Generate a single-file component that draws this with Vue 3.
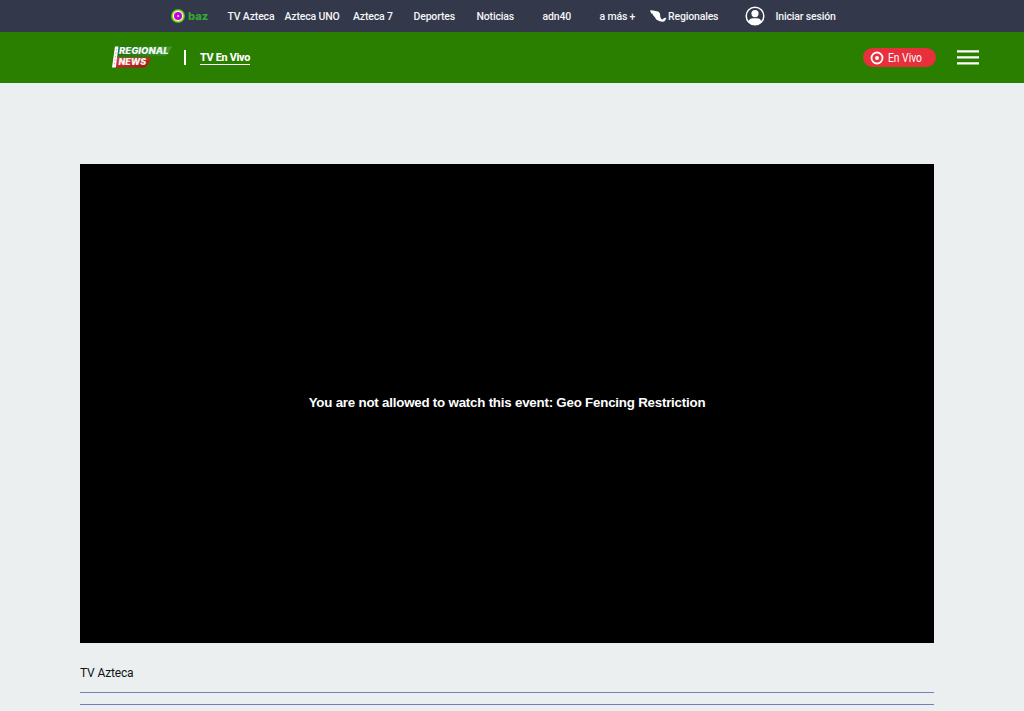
<script setup>
const links = ['TV Azteca', 'Azteca UNO', 'Azteca 7', 'Deportes', 'Noticias', 'adn40', 'a más +']
</script>

<template>
  <div class="page">
    <nav class="top">
      <a class="baz">
        <svg width="14" height="14" viewBox="0 0 14 14">
          <circle cx="7" cy="7" r="7" fill="#49b829" />
          <circle cx="7" cy="7" r="6" fill="#a5e52d" />
          <circle cx="7" cy="7" r="4.9" fill="#fff" />
          <circle cx="7" cy="7" r="4" fill="#c800d8" />
          <circle cx="7.2" cy="7" r=".9" fill="#fff" />
        </svg>
        <svg width="21" height="14" viewBox="0 0 21 14">
          <text x="0" y="10.6" textLength="20.3" lengthAdjust="spacingAndGlyphs">baz</text>
        </svg>
      </a>
      <a v-for="link in links" :key="link" class="link">{{ link }}</a>
      <svg class="map" width="17" height="13" viewBox="0 0 17 13">
        <path d="M0 .2 3.3.5 5.3 1 8.3 1.4 10 3.6 10.3 7 11.4 9.1 12.7 9.4 14 8.1 16.5 7.7 15.6 9.7 14.2 11.6 12.5 11.8 9.6 11.2 6.2 9.4 5.1 7.5 3.3 5.5 2.3 3.6 1.2 3.4Z" fill="#fff" />
      </svg>
      <a class="link">Regionales</a>
      <svg class="avatar" width="20" height="20" viewBox="0 0 20 20">
        <circle cx="10" cy="10" r="8.8" fill="none" stroke="#fff" stroke-width="1.5" />
        <circle cx="10" cy="7.6" r="3.6" fill="#fff" />
        <path d="M3.4 15.7Q4.6 12.3 8 12.3H12Q15.4 12.3 16.6 15.7Q14 19 10 19T3.4 15.7Z" fill="#fff" />
      </svg>
      <a class="link">Iniciar sesión</a>
    </nav>

    <header class="bar">
      <svg class="logo" width="60" height="24" viewBox="0 0 60 24">
        <defs>
          <linearGradient id="greenFade"><stop offset="0" stop-color="#176e20" /><stop offset="1" stop-color="#419d37" /></linearGradient>
          <linearGradient id="redFade" x2="1" y2="1"><stop offset="0" stop-color="#ef3540" /><stop offset=".7" stop-color="#b81e24" /><stop offset="1" stop-color="#8d1717" /></linearGradient>
        </defs>
        <path d="M7 .5H60L57 6 54 9.5H5Z" fill="url(#greenFade)" />
        <path d="M5 11.5H39L36 18.5 33 21.5H3Z" fill="url(#redFade)" />
        <path d="M3 .5H6.5L3.8 21.5H0Z" fill="#fff" />
        <path d="M4.6 3 2 20" stroke="#e39a94" stroke-width="1" stroke-dasharray="1.5 2" />
        <text x="7" y="8.2" textLength="49.5" lengthAdjust="spacingAndGlyphs">REGIONAL</text>
        <text x="6.5" y="19.2" textLength="27.5" lengthAdjust="spacingAndGlyphs">NEWS</text>
      </svg>
      <span class="divider"></span>
      <a class="section">TV En Vivo</a>
      <a class="live">
        <svg width="14" height="14" viewBox="0 0 14 14">
          <circle cx="7" cy="7" r="5.5" fill="none" stroke="#fff" stroke-width="1.8" />
          <circle cx="7" cy="7" r="2" fill="#fff" />
        </svg>
        <svg class="live-label" width="42" height="18" viewBox="0 0 42 18">
          <text x="0" y="12.5" textLength="34" lengthAdjust="spacingAndGlyphs">En Vivo</text>
        </svg>
      </a>
      <svg class="menu" width="22" height="15" viewBox="0 0 22 15">
        <path d="M0 1.3H22M0 7.3H22M0 13.4H22" stroke="#fff" stroke-width="2.2" />
      </svg>
    </header>

    <main>
      <div class="player">You are not allowed to watch this event: Geo Fencing Restriction</div>
      <p class="caption">TV Azteca</p>
      <hr />
      <hr />
    </main>
  </div>
</template>

<style>
html, body { background: #ebeff0; }
body { overflow: hidden; }
</style>

<style scoped>
.page { width: 1024px; height: 711px; overflow: hidden; background: #ebeff0; font-family: Roboto, "Liberation Sans", sans-serif; }
.top {
  height: 32px; background: #33384a; display: grid; align-items: center; padding-left: 171px; box-sizing: border-box;
  grid-template-columns: 56.5px 57px 68.5px 60.5px 63px 66px 57px 50px 18.5px 76.5px 31px 80px;
  color: #f5f5f7; font-size: 10.5px; font-weight: 500; letter-spacing: -0.17px; line-height: 31px; white-space: nowrap;
}
.link { padding-top: 1px; }
.baz { display: flex; align-items: center; gap: 3px; }
.baz text { font: 800 11px Inter, sans-serif; letter-spacing: 0; fill: #36a634; }
.bar { height: 51px; background: #2a7e00; display: flex; align-items: center; padding-left: 112px; box-sizing: border-box; }
.logo { flex: none; }
.logo text { font: italic 900 8.5px Inter, sans-serif; fill: #f0f6ee; }
.divider { width: 2px; height: 15px; background: #fff; margin-left: 12px; }
.section { margin-left: 14px; margin-top: 1px; color: #fff; font-size: 10.8px; font-weight: 800; letter-spacing: -0.3px; line-height: 13px; border-bottom: 1px solid #fff; white-space: nowrap; }
.live { margin-left: auto; width: 73px; height: 19px; border-radius: 10px; background: #e7303b; display: flex; align-items: center; gap: 4px; padding-left: 7px; box-sizing: border-box; }
.live svg { flex: none; }
.live text { font: 400 12.5px Roboto, sans-serif; fill: #fff; }
.menu { flex: none; margin: 0 45px 0 21px; }
main { width: 854px; margin-left: 80px; padding-top: 81px; }
.player { height: 479px; padding-bottom: 2px; box-sizing: border-box; background: #000; color: #fff; display: flex; align-items: center; justify-content: center; font: bold 13.3px "Liberation Sans", sans-serif; letter-spacing: -0.205px; }
.caption { margin: 21px 0 9px; font-size: 12px; letter-spacing: -0.15px; line-height: 19px; color: #111; }
hr { border: 0; height: 1px; margin: 0 0 11px; background: #737fbe; }
</style>
